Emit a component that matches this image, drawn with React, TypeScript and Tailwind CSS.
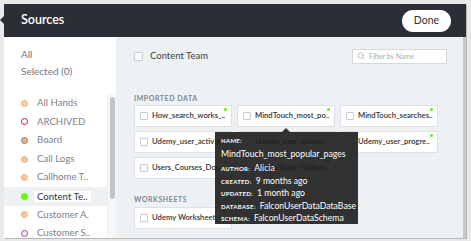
import { Search } from "lucide-react"

const font = { fontFamily: "Lato, 'Open Sans', sans-serif" }

type Source = { name: string; dot: string; selected?: boolean }

const sources: Source[] = [
  { name: "All Hands", dot: "bg-[#fbd2ae] border-[1.5px] border-[#f2aa6c]" },
  { name: "ARCHIVED", dot: "bg-white border-[1.5px] border-[#d0102a]" },
  { name: "Board", dot: "bg-[#dcb48e] border-[1.5px] border-[#b07a45]" },
  { name: "Call Logs", dot: "bg-[#f7c39b] border border-[#f0b585]" },
  { name: "Callhome T..", dot: "bg-[#f7c39b] border border-[#f0b585]" },
  { name: "Content Te..", dot: "bg-[#66ff00]", selected: true },
  { name: "Customer A.", dot: "bg-[#f7c39b] border border-[#f0b585]" },
  { name: "Customer S..", dot: "bg-[#f3e6f7] border-[1.5px] border-[#9450ad]" },
]

const imported = [
  "How_search_works_..",
  "MindTouch_most_po..",
  "MindTouch_searches..",
  "Udemy_user_activity..",
  "Udemy_user_course..",
  "Udemy_user_progre..",
  "Users_Courses_Doc..",
  "Wistia Stats - Videos..",
]

function Checkbox() {
  return <span className="w-[8px] h-[8px] shrink-0 bg-white border border-[#c9cdd2] rounded-[1px]" />
}

function Card({ label }: { label: string }) {
  return (
    <div className="relative h-[22px] bg-white border border-[#dde1e6] flex items-center pl-[5px] pr-[2px] gap-[4px]">
      <Checkbox />
      <span className="text-[7.7px] font-semibold text-[#333] whitespace-nowrap overflow-hidden">{label}</span>
      <span className="absolute right-[4px] top-[2px] w-[3px] h-[3px] rounded-full bg-[#5cf000]" />
    </div>
  )
}

function SectionLabel({ children }: { children: string }) {
  return (
    <div className="h-[10px] leading-[10px] text-[7px] font-bold tracking-[0.08em] text-[#7c8792] uppercase">
      {children}
    </div>
  )
}

const meta = [
  ["AUTHOR:", "Alicia"],
  ["CREATED:", "9 months ago"],
  ["UPDATED:", "1 month ago"],
  ["DATABASE:", "FalconUserDataDataBase"],
  ["SCHEMA:", "FalconUserDataSchema"],
]

export default function App() {
  return (
    <div style={font} className="relative w-[471px] h-[241px] overflow-hidden bg-[#e9e9e9] pt-[4px] pl-[4px] pr-[5px] pb-[3px]">
      {/* little notch on the left of the header */}
      <span className="absolute left-0 top-[16px] w-0 h-0 border-y-[4px] border-y-transparent border-r-[4px] border-r-[#2c2e35]" />

      <div className="h-full flex flex-col shadow-[1px_1px_0_#b8b8b8]">
        <div className="h-[33px] shrink-0 bg-[#2c2e35] flex items-center justify-between pl-[17px] pr-[15px]">
          <span className="text-white text-[12.5px] font-semibold">Sources</span>
          <button className="h-[22px] w-[49px] rounded-full bg-white text-[#333] text-[10.5px]">Done</button>
        </div>

        <div className="flex-1 flex min-h-0">
          {/* sidebar */}
          <div className="w-[112px] shrink-0 bg-white flex flex-col">
            <div className="pt-[9px] pl-[17px] text-[10px] text-[#707780]">
              <div className="h-[17px] leading-[17px]">All</div>
              <div className="h-[17px] leading-[17px]">Selected (0)</div>
            </div>
            <div className="mt-[14px] flex-1 flex min-h-0">
              <div className="flex-1">
                {sources.map((s) => (
                  <div
                    key={s.name}
                    className={
                      "h-[18.6px] flex items-center pl-[17px] " + (s.selected ? "bg-[#eef1f4]" : "")
                    }
                  >
                    <span className={"w-[7px] h-[7px] rounded-full shrink-0 " + s.dot} />
                    <span
                      className={
                        "text-[9.6px] whitespace-nowrap " +
                        (s.selected
                          ? "ml-[6px] bg-white px-[3px] leading-[11px] text-[#3d434b] font-medium"
                          : "ml-[9px] text-[#7b828a]")
                      }
                    >
                      {s.name}
                    </span>
                  </div>
                ))}
              </div>
              <div className="w-[9px] bg-[#f7f7f7] border-l border-[#efefef] pt-[3px] flex justify-center">
                <div className="w-[5px] h-[102px] rounded-full bg-[#c3c3c3]" />
              </div>
            </div>
          </div>

          {/* main */}
          <div className="flex-1 bg-[#eef1f4] pt-[11px] pl-[18px] pr-[16px] border-r-[3px] border-[#c9c9c9]">
            <div className="h-[16px] flex items-center justify-between">
              <div className="flex items-center gap-[7px]">
                <span className="w-[9px] h-[9px] bg-white border border-[#c9cdd2] rounded-[1px]" />
                <span className="text-[9.5px] text-[#3b4047]">Content Team</span>
              </div>
              <div className="w-[95px] h-[15px] bg-white border border-[#d5d9de] flex items-center pl-[4px] gap-[4px]">
                <Search size={8} strokeWidth={2} className="text-[#9aa1a9]" />
                <span className="text-[7px] text-[#a7adb4]">Filter by Name</span>
              </div>
            </div>

            <div className="mt-[29px] mb-[2px]">
              <SectionLabel>Imported Data</SectionLabel>
            </div>
            <div className="grid grid-cols-[98px_98px_98px] gap-x-[5px] gap-y-[4px]">
              {imported.map((n) => (
                <Card key={n} label={n} />
              ))}
            </div>

            <div className="mt-[15px] mb-[3px]">
              <SectionLabel>Worksheets</SectionLabel>
            </div>
            <div className="grid grid-cols-[98px_98px_98px]">
              <Card label="Udemy Worksheet" />
            </div>
          </div>
        </div>
      </div>

      {/* tooltip */}
      <div className="absolute left-[215px] top-[132px] w-[143px] h-[92px] bg-[#1c1c1c]/[0.9] text-white pl-[6px] pt-[3px]">
        <span className="absolute left-[67px] -top-[4px] w-0 h-0 border-x-[4px] border-x-transparent border-b-[4px] border-b-[#1c1c1c]/[0.9]" />
        <div className="h-[12.5px] leading-[12.5px] text-[6px] font-bold tracking-[0.05em]">NAME:</div>
        <div className="h-[11.5px] leading-[11.5px] text-[8.7px]">MindTouch_most_popular_pages</div>
        {meta.map(([k, v]) => (
          <div key={k} className="h-[12.5px] leading-[12.5px] whitespace-nowrap">
            <span className="text-[6px] font-bold tracking-[0.05em]">{k}</span>{" "}
            <span className="text-[8.7px]">{v}</span>
          </div>
        ))}
      </div>
    </div>
  )
}
